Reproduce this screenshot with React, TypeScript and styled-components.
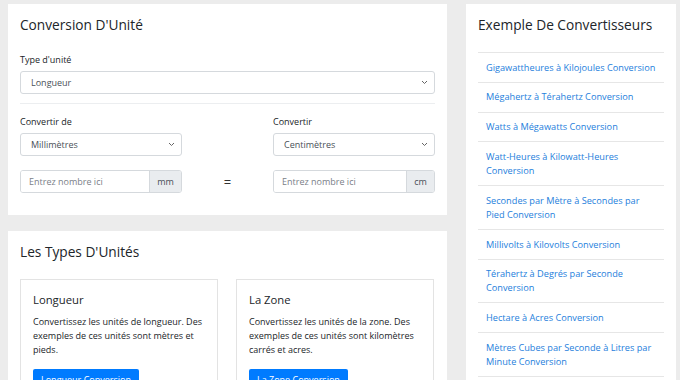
import React from "react";
import styled, { createGlobalStyle } from "styled-components";

const GlobalStyle = createGlobalStyle`
  html, body { margin: 0; padding: 0; }
  body {
    background: #ececec;
    font-family: "Open Sans", "Noto Sans", sans-serif;
    color: #212529;
    width: 680px;
    height: 380px;
    overflow: hidden;
  }
  * { box-sizing: border-box; }
`;

const Page = styled.div`
  display: grid;
  grid-template-columns: 439px 210px;
  column-gap: 19px;
  padding: 4px 0 0 8px;
  align-items: start;
`;

const Column = styled.div`
  display: flex;
  flex-direction: column;
  gap: 16px;
`;

const Card = styled.section<{ $pb?: number }>`
  background: #fff;
  padding: 12px 12px ${(p) => p.$pb ?? 12}px 12px;
`;

const CardTitle = styled.h2<{ $mb?: number }>`
  margin: 0 0 ${(p) => p.$mb ?? 18}px 0;
  font-size: 13.7px;
  line-height: 18px;
  font-weight: 400;
  color: #212529;
  white-space: nowrap;
`;

const Label = styled.div`
  font-size: 9px;
  line-height: 15px;
  margin-bottom: 4px;
  color: #212529;
`;

const SelectBox = styled.div`
  height: 23px;
  border: 1px solid #d5d9dd;
  border-radius: 3px;
  background: #fff;
  display: flex;
  align-items: center;
  justify-content: space-between;
  padding: 0 6px 0 10px;
  font-size: 9px;
  color: #495057;
`;

const Chevron = () => (
  <svg width="7" height="5" viewBox="0 0 7 5">
    <path d="M1 1 L3.5 3.5 L6 1" stroke="#666" strokeWidth="1" fill="none" />
  </svg>
);

const Divider = styled.hr`
  border: 0;
  border-top: 1px solid #eceef0;
  margin: 9px 0 10px 0;
`;

const ConvertGrid = styled.div`
  display: grid;
  grid-template-columns: 162px 1fr 162px;
  row-gap: 14px;
  align-items: center;
`;

const Field = styled.div``;

const InputGroup = styled.div`
  display: flex;
  height: 23px;
  border: 1px solid #d5d9dd;
  border-radius: 3px;
  overflow: hidden;
`;

const InputText = styled.div`
  flex: 1;
  display: flex;
  align-items: center;
  padding-left: 8px;
  font-size: 9px;
  color: #7a8088;
  background: #fff;
`;

const Addon = styled.div<{ $w: number }>`
  width: ${(p) => p.$w}px;
  background: #e9ecef;
  border-left: 1px solid #d5d9dd;
  display: flex;
  align-items: center;
  justify-content: center;
  font-size: 9px;
  color: #495057;
`;

const Equals = styled.div`
  text-align: center;
  font-size: 13px;
  color: #333;
`;

const TypeGrid = styled.div`
  display: grid;
  grid-template-columns: 198px 198px;
  column-gap: 18px;
`;

const TypeCard = styled.div`
  border: 1px solid #e3e3e3;
  padding: 11px 12px 20px 12px;
`;

const TypeTitle = styled.h3`
  margin: 0 0 6px 0;
  font-size: 11.3px;
  line-height: 18px;
  font-weight: 400;
`;

const TypeText = styled.p`
  margin: 0 0 9px 0;
  font-size: 9px;
  line-height: 14px;
  color: #212529;
`;

const Button = styled.div`
  display: inline-block;
  background: #007bff;
  color: #fff;
  font-size: 9px;
  line-height: 14px;
  padding: 4px 8px 6px 8px;
  border-radius: 2px;
`;

const List = styled.ul`
  list-style: none;
  margin: 0;
  padding: 0;
`;

const Item = styled.li`
  border-top: 1px solid #e6e6e6;
  padding: 7.6px 8px 7.2px 8px;
  font-size: 9.2px;
  line-height: 14px;
  color: #2580dc;
`;

const links = [
  "Gigawattheures à Kilojoules Conversion",
  "Mégahertz à Térahertz Conversion",
  "Watts à Mégawatts Conversion",
  "Watt-Heures à Kilowatt-Heures Conversion",
  "Secondes par Mètre à Secondes par Pied Conversion",
  "Millivolts à Kilovolts Conversion",
  "Térahertz à Degrés par Seconde Conversion",
  "Hectare à Acres Conversion",
  "Mètres Cubes par Seconde à Litres par Minute Conversion",
  "Kilowattheures à Mégajoules Conversion",
];

export default function App() {
  return (
    <>
      <GlobalStyle />
      <Page>
        <Column>
          <Card $pb={22}>
            <CardTitle>Conversion D'Unité</CardTitle>
            <Label>Type d'unité</Label>
            <SelectBox>
              Longueur
              <Chevron />
            </SelectBox>
            <Divider />
            <ConvertGrid>
              <Field>
                <Label>Convertir de</Label>
                <SelectBox>
                  Millimètres
                  <Chevron />
                </SelectBox>
              </Field>
              <div />
              <Field>
                <Label>Convertir</Label>
                <SelectBox>
                  Centimètres
                  <Chevron />
                </SelectBox>
              </Field>
              <InputGroup>
                <InputText>Entrez nombre ici</InputText>
                <Addon $w={32}>mm</Addon>
              </InputGroup>
              <Equals>=</Equals>
              <InputGroup>
                <InputText>Entrez nombre ici</InputText>
                <Addon $w={28}>cm</Addon>
              </InputGroup>
            </ConvertGrid>
          </Card>
          <Card>
            <CardTitle>Les Types D'Unités</CardTitle>
            <TypeGrid>
              <TypeCard>
                <TypeTitle>Longueur</TypeTitle>
                <TypeText>
                  Convertissez les unités de longueur. Des exemples de ces
                  unités sont mètres et pieds.
                </TypeText>
                <Button>Longueur Conversion</Button>
              </TypeCard>
              <TypeCard>
                <TypeTitle>La Zone</TypeTitle>
                <TypeText>
                  Convertissez les unités de la zone. Des exemples de ces
                  unités sont kilomètres carrés et acres.
                </TypeText>
                <Button>La Zone Conversion</Button>
              </TypeCard>
            </TypeGrid>
          </Card>
        </Column>
        <Card>
          <CardTitle $mb={18}>Exemple De Convertisseurs</CardTitle>
          <List>
            {links.map((l) => (
              <Item key={l}>{l}</Item>
            ))}
          </List>
        </Card>
      </Page>
    </>
  );
}
